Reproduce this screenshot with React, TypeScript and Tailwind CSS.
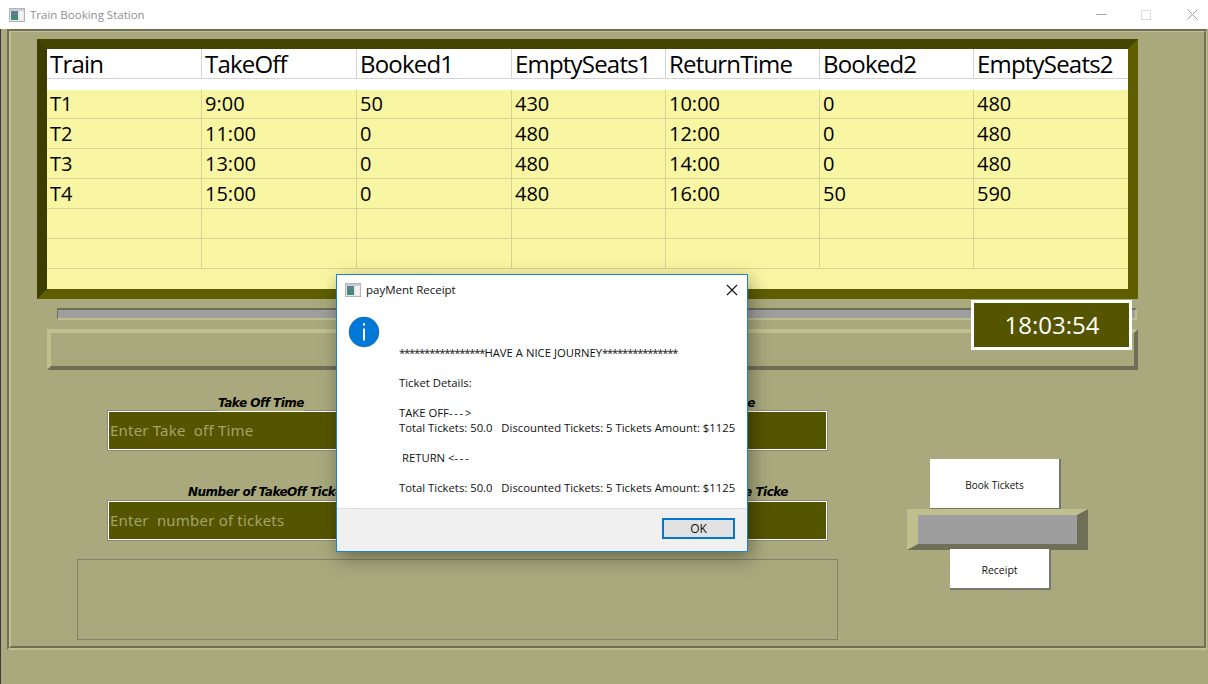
import React from "react";

const rows = [
  ["T1", "9:00", "50", "430", "10:00", "0", "480"],
  ["T2", "11:00", "0", "480", "12:00", "0", "480"],
  ["T3", "13:00", "0", "480", "14:00", "0", "480"],
  ["T4", "15:00", "0", "480", "16:00", "50", "590"],
  ["", "", "", "", "", "", ""],
  ["", "", "", "", "", "", ""],
];
const heads = ["Train", "TakeOff", "Booked1", "EmptySeats1", "ReturnTime", "Booked2", "EmptySeats2"];

const ui = "font-['Open_Sans','Noto_Sans',sans-serif]";
const cols = "grid grid-cols-[155px_155px_155px_154px_154px_154px_154px]";

function WinIcon() {
  return (
    <svg width="16" height="14" viewBox="0 0 16 14" className="shrink-0">
      <rect x="0.5" y="0.5" width="15" height="13" fill="#e8e8e8" stroke="#b4b4b4" />
      <rect x="1" y="1" width="14" height="2" fill="#c9ced2" />
      <rect x="2" y="3" width="7" height="9" fill="#3f8a7c" />
      <rect x="2" y="3" width="7" height="4" fill="#5f7f8f" />
      <rect x="11" y="3" width="3" height="9" fill="#f4f4f4" />
    </svg>
  );
}

function Field({ label, placeholder, labelCls, w }: { label: string; placeholder: string; labelCls: string; w: string }) {
  return (
    <div className={`relative h-[41px] ${w} border border-[#8a8a80] bg-[#555500]`}>
      <div className="h-full border border-white flex items-center pl-[1px]">
        <span className="text-[15px] tracking-[0.2px] text-[#a3a36c] whitespace-pre font-['Noto_Sans',sans-serif]">{placeholder}</span>
      </div>
      <span className={`absolute text-[12px] leading-[15px] tracking-[-0.5px] font-bold italic text-black whitespace-pre font-['DejaVu_Sans',sans-serif] bg-[#a9a97d] ${labelCls}`}>{label}</span>
    </div>
  );
}

function Dashes({ children }: { children: React.ReactNode }) {
  return <span className="tracking-[1.7px]">{children}</span>;
}

function Stars({ children }: { children: React.ReactNode }) {
  return <span className="tracking-[-1.2px]">{children}</span>;
}

function Dialog() {
  const total = "Total Tickets: 50.0   Discounted Tickets: 5 Tickets Amount: $1125";
  return (
    <div className={`absolute left-[336px] top-[274px] w-[412px] h-[278px] bg-white border border-[#1883d7] shadow-[3px_6px_18px_rgba(0,0,0,0.38)] flex flex-col ${ui}`}>
      <div className="h-[29px] flex items-center pl-[8px] pr-[9px] shrink-0">
        <WinIcon />
        <span className="ml-[5px] text-[11.5px] text-[#111] leading-none">payMent Receipt</span>
        <svg width="12" height="12" viewBox="0 0 12 12" className="ml-auto" fill="none" stroke="#111" strokeWidth="1.1">
          <path d="M1 1 L11 11 M11 1 L1 11" />
        </svg>
      </div>
      <div className="flex-1 flex pl-[11px]">
        <svg width="32" height="32" viewBox="0 0 32 32" className="mt-[12px] shrink-0">
          <circle cx="16" cy="16" r="15" fill="#0078d7" stroke="#1a5f9e" strokeWidth="0.6" />
          <rect x="15" y="12.5" width="2" height="12" fill="#fff" />
          <rect x="15" y="7" width="2" height="2.5" fill="#fff" />
        </svg>
        <div className="ml-[19px] mt-[41px] text-[11.3px] leading-[15px] text-[#111] whitespace-pre">
          <div className="h-[15px]"><Stars>*****************</Stars>HAVE A NICE JOURNEY<Stars>***************</Stars></div>
          <div className="h-[15px]" />
          <div className="h-[15px]">Ticket Details:</div>
          <div className="h-[15px]" />
          <div className="h-[15px]">TAKE OFF<Dashes>---&gt;</Dashes></div>
          <div className="h-[15px]">{total}</div>
          <div className="h-[15px]" />
          <div className="h-[15px]"> RETURN &lt;<Dashes>---</Dashes></div>
          <div className="h-[15px]" />
          <div className="h-[15px]">{total}</div>
        </div>
      </div>
      <div className="h-[43px] shrink-0 bg-[#f0f0f0] border-t border-[#dfdfdf] flex items-start justify-end pr-[12px] pt-[9px]">
        <div className="w-[73px] h-[21px] border-2 border-[#0078d7] bg-[#e1e1e1] flex items-center justify-center text-[12px] text-[#111]">OK</div>
      </div>
    </div>
  );
}

export default function App() {
  return (
    <div className="relative w-[1208px] h-[684px] overflow-hidden bg-[#a9a97d] flex flex-col">
      <header className="h-[29px] shrink-0 bg-white flex items-center pl-[9px]">
        <WinIcon />
        <span className={`ml-[5px] text-[11.5px] text-[#8f8f8f] leading-none ${ui}`}>Train Booking Station</span>
        <div className="ml-auto flex items-center">
          <div className="w-[11px] h-px bg-[#a8a8a8] mr-[34px]" />
          <div className="w-[10px] h-[10px] border border-[#dcdcdc] mr-[36px]" />
          <svg width="11" height="11" viewBox="0 0 11 11" className="mr-[10px]" fill="none" stroke="#a0a0a0" strokeWidth="1">
            <path d="M0.5 0.5 L10.5 10.5 M10.5 0.5 L0.5 10.5" />
          </svg>
        </div>
      </header>

      <div className="flex-1 flex">
        <div className="w-px bg-[#3b3b3b] shrink-0" />
        <div className="flex-1 pl-[6px] pr-px pb-[34px] flex">
          {/* etched outer frame */}
          <div className="flex-1 border-t-2 border-l-2 border-r border-b-2 border-t-[#6f6f58] border-l-[#6f6f58] border-r-[#c0c08f] border-b-[#c0c08f]">
            <div className="h-full border-l-2 border-t border-r-2 border-b-2 border-t-[#c0c08f] border-l-[#c0c08f] border-r-[#6f6f58] border-b-[#6f6f58] pl-[26px]">
              {/* table frame */}
              <div className="mt-[7px] w-[1101px] h-[260px] border-[10px] border-t-[#454500] border-l-[#3d3d00] border-r-[#5e5e00] border-b-[#5e5e00] bg-[#f9f6a3] flex flex-col">
                <div className="h-[41px] shrink-0 bg-white">
                  <div className={`${cols} h-[30px] border-b border-[#d4d4d4]`}>
                    {heads.map((h, i) => (
                      <div key={h} className={`pl-[3px] text-[24px] leading-[29px] tracking-[-0.8px] text-black whitespace-pre ${ui} ${i < 6 ? "border-r border-[#d4d4d4]" : ""}`}>{h}</div>
                    ))}
                  </div>
                </div>
                {rows.map((r, ri) => (
                  <div key={ri} className={`${cols} ${ri === 0 ? "h-[29px]" : "h-[30px]"} shrink-0 border-b border-[#d8d394]`}>
                    {r.map((c, i) => (
                      <div key={i} className={`pl-[3px] text-[20px] ${ri === 0 ? "leading-[27px]" : "leading-[29px]"} text-black ${ui} ${i < 6 ? "border-r border-[#d8d394]" : ""}`}>{c}</div>
                    ))}
                  </div>
                ))}
              </div>

              {/* slider row */}
              <div className="relative ml-[20px] mt-[9px] w-[1080px] h-[12px] border-t-2 border-[#6f6f58] border-b-2 border-b-[#c0c08f] border-l border-l-[#6f6f58] border-r-2 border-r-[#c0c08f] bg-[#9e9e9e]" />

              {/* raised panel + clock */}
              <div className="relative ml-[10px] mt-[9px] w-[1091px] h-[41px] border-4 border-t-[#c0c08f] border-l-[#c0c08f] border-r-[#6f6f58] border-b-[#6f6f58]">
                <div className={`absolute left-[920px] top-[-33px] w-[161px] h-[50px] border-[3px] border-white bg-[#555500] flex items-center justify-center pl-[1px] text-[24px] text-white ${ui}`}>18:03:54</div>
              </div>

              {/* form + actions */}
              <div className="flex">
                <div className="ml-[70px] mt-[40px] w-[721px] flex flex-col">
                  <div className="flex justify-between">
                    <Field label="Take Off Time" placeholder="Enter Take  off Time" labelCls="left-[110px] top-[-15px]" w="w-[346px]" />
                    <Field label="Return Time" placeholder="" labelCls="right-[72px] top-[-15px]" w="w-[346px]" />
                  </div>
                  <div className="flex justify-between mt-[49px]">
                    <Field label="Number of TakeOff Ticke" placeholder="Enter  number of tickets" labelCls="left-[80px] top-[-16px]" w="w-[346px]" />
                    <Field label="Number of Return Time Ticke" placeholder="" labelCls="right-[39px] top-[-16px]" w="w-[346px]" />
                  </div>
                  <div className="-ml-[30px] mt-[18px] w-[761px] h-[81px] border border-[#80806c]" />
                </div>

                <div className="ml-[79px] mt-[89px] w-[181px] flex flex-col items-start">
                  <button className={`ml-[23px] w-[131px] h-[51px] pt-[3px] bg-white border-r-2 border-b-2 border-[#77776f] text-[10px] text-[#111] ${ui}`}>Book Tickets</button>
                  <div className="w-[181px] h-[41px] shrink-0 -mt-px border-y-[6px] border-x-[11px] border-t-[#c0c08f] border-l-[#c0c08f] border-r-[#6f6f58] border-b-[#6f6f58] bg-[#9e9e9e]" />
                  <button className={`ml-[43px] -mt-px w-[101px] h-[41px] pt-[4px] bg-white border-r-2 border-b-2 border-[#77776f] text-[10.5px] text-[#111] ${ui}`}>Receipt</button>
                </div>
              </div>
            </div>
          </div>
        </div>
      </div>

      <Dialog />
    </div>
  );
}
